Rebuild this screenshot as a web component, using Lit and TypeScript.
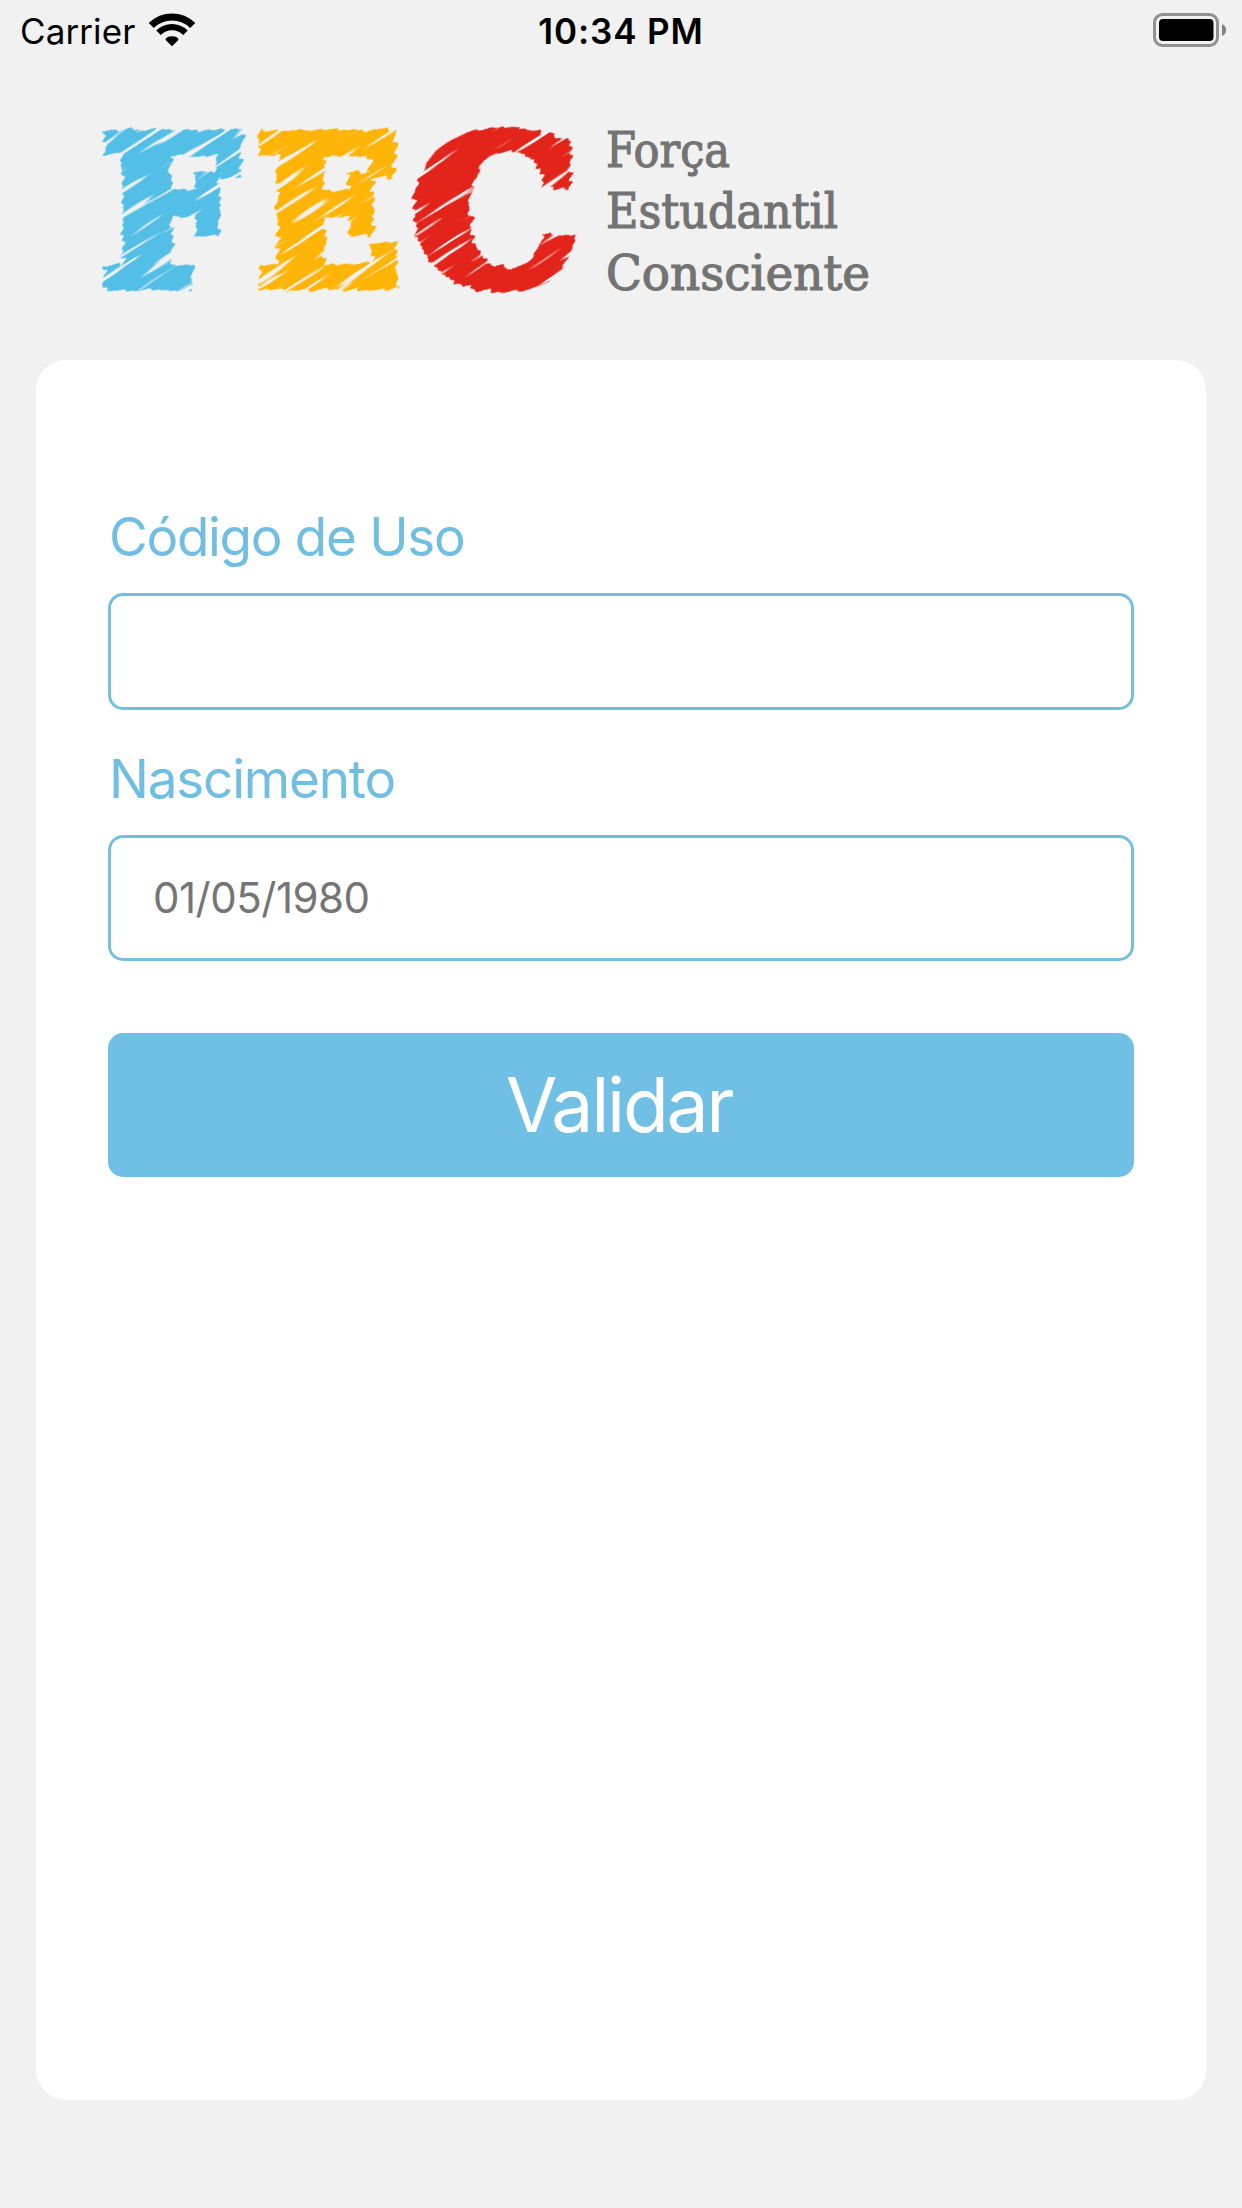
import { LitElement, html, css, svg } from "lit";
import { customElement } from "lit/decorators.js";

@customElement("status-bar")
class StatusBar extends LitElement {
  static styles = css`
    :host {
      display: grid;
      grid-template-columns: 1fr auto 1fr;
      align-items: center;
      height: 60px;
      padding: 0 15px 0 20px;
      box-sizing: border-box;
      color: #000;
      font-family: Inter, "Liberation Sans", sans-serif;
      font-size: 35px;
      line-height: 62px;
    }
    .left {
      display: flex;
      align-items: center;
      gap: 14px;
    }
    .carrier {
      letter-spacing: 0.1px;
      height: 60px;
    }
    .time {
      font-weight: 600;
      letter-spacing: 0.9px;
      height: 60px;
      padding-right: 5px;
    }
    .battery {
      justify-self: end;
    }
    svg {
      display: block;
    }
  `;

  render() {
    return html`
      <div class="left">
        <span class="carrier">Carrier</span>
        <svg class="wifi" width="46" height="34" viewBox="0 0 46 34">
          <g fill="none" stroke="#000">
            <path d="M2.3 12.5A29.3 29.3 0 0 1 43.7 12.5" stroke-width="7" />
            <path d="M9.5 19.7A19 19 0 0 1 36.5 19.7" stroke-width="6.2" />
          </g>
          <path d="M23 33.3L16.6 27Q16.6 23.3 23 23.3Q29.4 23.3 29.4 27Z" />
        </svg>
      </div>
      <span class="time">10:34 PM</span>
      <svg class="battery" width="74" height="34" viewBox="0 0 74 34">
        <rect x="1.5" y="1.5" width="63" height="31" rx="8" fill="none" stroke="#909090" stroke-width="3" />
        <rect x="6" y="6" width="54.5" height="22" rx="4" />
        <path d="M69 11Q73 12.5 73 17T69 23Z" fill="#808080" />
      </svg>
    `;
  }
}

interface Letter {
  char: string;
  color: string;
  x: number;
  width: number;
}

const LETTERS: Letter[] = [
  { char: "F", color: "#54bfe6", x: 102, width: 136 },
  { char: "E", color: "#ffb507", x: 257, width: 143 },
  { char: "C", color: "#e3241b", x: 412, width: 166 },
];

const WORDS = [
  { text: "Força", y: 107, width: 124 },
  { text: "Estudantil", y: 168, width: 232 },
  { text: "Consciente", y: 230, width: 264 },
];

@customElement("brand-logo")
class BrandLogo extends LitElement {
  static styles = css`
    :host {
      display: block;
    }
    svg {
      display: block;
    }
    .letter {
      font: bold 202px "DejaVu Serif", serif;
      stroke-width: 13px;
      stroke-linejoin: miter;
    }
    .word {
      font: 48px "DejaVu Serif", serif;
      fill: #737373;
      stroke: #737373;
      stroke-width: 1.2px;
    }
  `;

  render() {
    return html`
      <svg width="1242" height="300" viewBox="0 0 1242 300">
        <defs>
          <!-- Streaks run along x; the group that uses it is rotated to the pen's angle. -->
          <filter id="pen" filterUnits="userSpaceOnUse" x="-120" y="60" width="800" height="520"
            color-interpolation-filters="sRGB">
            <feTurbulence type="fractalNoise" baseFrequency="0.008 0.21" numOctaves="1" seed="7" result="noise" />
            <feColorMatrix in="noise" type="matrix"
              values="2 0 0 0 -0.5  0 0 0 0 0.5  0 0 0 0 0.5  0 0 0 0 1" result="shift" />
            <feDisplacementMap in="SourceGraphic" in2="shift" scale="9"
              xChannelSelector="R" yChannelSelector="G" result="ragged" />
            <feTurbulence type="fractalNoise" baseFrequency="0.014 0.21" numOctaves="1" seed="21" result="grain" />
            <feColorMatrix in="grain" type="matrix"
              values="0 0 0 0 0  0 0 0 0 0  0 0 0 0 0  14 0 0 0 -4.4" result="gaps" />
            <feComposite in="ragged" in2="gaps" operator="in" />
          </filter>
        </defs>
        <g transform="rotate(-33)">
          <g filter="url(#pen)">
            <g transform="rotate(33)">
              ${LETTERS.map(
                (l) => svg`<text class="letter" x=${l.x} y="223.5" fill=${l.color} stroke=${l.color}
                  textLength=${l.width} lengthAdjust="spacingAndGlyphs">${l.char}</text>`
              )}
            </g>
          </g>
        </g>
        ${WORDS.map(
          (w) => svg`<text class="word" x="606" y=${w.y} textLength=${w.width}
            lengthAdjust="spacingAndGlyphs">${w.text}</text>`
        )}
      </svg>
    `;
  }
}

@customElement("app-root")
class AppRoot extends LitElement {
  static styles = css`
    :host {
      display: flex;
      flex-direction: column;
      height: 2208px;
      background: #f1f1f1;
      font-family: Inter, "Liberation Sans", sans-serif;
    }
    .card {
      flex: none;
      height: 1740px;
      margin: 0 36px;
      padding: 144px 72px 0;
      box-sizing: border-box;
      background: #fff;
      border-radius: 30px;
      display: flex;
      flex-direction: column;
    }
    .label {
      color: #70bee2;
      font-size: 53px;
      line-height: 66px;
      letter-spacing: -1.3px;
      height: 66px;
      padding: 0 0 23px 1px;
    }
    .label.second {
      padding-top: 36px;
      letter-spacing: -1.2px;
    }
    .field {
      display: block;
      width: 100%;
      height: 117px;
      box-sizing: border-box;
      border: 3px solid #76bee0;
      border-radius: 15px;
      background: #fff;
      padding: 0 42px;
      margin: 0;
      outline: none;
      font-family: inherit;
      font-size: 42px;
      letter-spacing: -0.5px;
    }
    .field.date {
      height: 126px;
      padding-bottom: 2px;
    }
    .field::placeholder {
      color: #757575;
      opacity: 1;
    }
    .submit {
      margin: 72px 0 0;
      height: 144px;
      border: 0;
      border-radius: 15px;
      background: #70bfe4;
      color: #fff;
      font-family: inherit;
      font-size: 75px;
      letter-spacing: -2.3px;
      padding: 0 4px 1px 0;
    }
  `;

  render() {
    return html`
      <status-bar></status-bar>
      <brand-logo></brand-logo>
      <main class="card">
        <label class="label" for="code">Código de Uso</label>
        <input class="field" id="code" type="text" />
        <label class="label second" for="birth">Nascimento</label>
        <input class="field date" id="birth" type="text" placeholder="01/05/1980" />
        <button class="submit">Validar</button>
      </main>
    `;
  }
}
